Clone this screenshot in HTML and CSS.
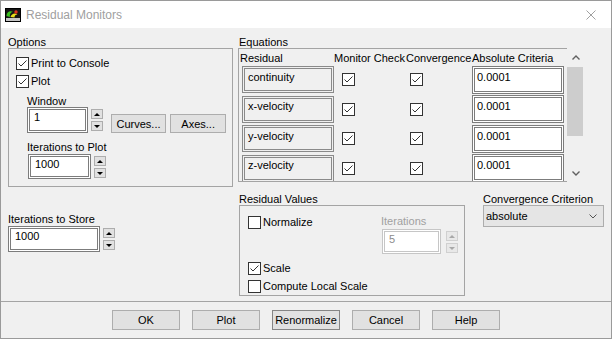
FILE: index.html
```html
<!DOCTYPE html>
<html>
<head>
<meta charset="utf-8">
<link rel="stylesheet" href="styles.css">
</head>
<body>
<div class="window">
  <div class="titlebar">
    <svg class="app-icon" viewBox="0 0 16 14">
      <rect x="0.5" y="0.5" width="15" height="13" fill="#151515" stroke="#000"/>
      <rect x="1" y="10" width="14" height="3" fill="#c4c4c4"/>
      <path d="M1.5 8 C1.5 3.5 5.5 2 8 4 C6 4 4.5 5.5 5 9 Z" fill="#3cc21e"/>
      <path d="M5.5 9 C6.5 5.5 10 4.5 12.5 6.5 C10.5 6.5 9.5 7.5 9.5 9.5 Z" fill="#e6dc1c"/>
      <circle cx="11" cy="4" r="1.7" fill="#e0301c"/>
    </svg>
    <span class="title">Residual Monitors</span>
    <svg class="close" viewBox="0 0 10 10"><path d="M0.5 0.5 L9.5 9.5 M9.5 0.5 L0.5 9.5"/></svg>
  </div>

  <div class="body">
    <div class="left">
      <div class="glabel">Options</div>
      <div class="groupbox options">
        <label class="check"><span class="cb on"><svg viewBox="0 0 11 11"><path d="M1.5 5.5 L4 8 L9.5 2.5"/></svg></span>Print to Console</label>
        <label class="check"><span class="cb on"><svg viewBox="0 0 11 11"><path d="M1.5 5.5 L4 8 L9.5 2.5"/></svg></span>Plot</label>
        <div class="sub">
          <div class="flabel win-label">Window</div>
          <div class="spin-row">
            <div class="input w-window">1</div>
            <div class="spinner"><span class="sbtn"><i class="tri up"></i></span><span class="sbtn"><i class="tri down"></i></span></div>
            <span class="btn small curves">Curves...</span>
            <span class="btn small axes">Axes...</span>
          </div>
          <div class="flabel plot-label">Iterations to Plot</div>
          <div class="spin-row plot-row">
            <div class="input w-plot">1000</div>
            <div class="spinner"><span class="sbtn"><i class="tri up"></i></span><span class="sbtn"><i class="tri down"></i></span></div>
          </div>
        </div>
      </div>
      <div class="flabel store-label">Iterations to Store</div>
      <div class="spin-row store-row">
        <div class="input w-store">1000</div>
        <div class="spinner"><span class="sbtn"><i class="tri up"></i></span><span class="sbtn"><i class="tri down"></i></span></div>
      </div>
    </div>

    <div class="right">
      <div class="glabel eq-label">Equations</div>
      <div class="eq">
        <div class="eq-frame">
          <div class="eq-grid">
            <div class="hd">Residual</div>
            <div class="hd">Monitor Check</div>
            <div class="hd">Convergence</div>
            <div class="hd">Absolute Criteria</div>

            <div class="name">continuity</div>
            <div class="c-mon"><span class="cb on"><svg viewBox="0 0 11 11"><path d="M1.5 5.5 L4 8 L9.5 2.5"/></svg></span></div>
            <div class="c-conv"><span class="cb on"><svg viewBox="0 0 11 11"><path d="M1.5 5.5 L4 8 L9.5 2.5"/></svg></span></div>
            <div class="crit">0.0001</div>

            <div class="name">x-velocity</div>
            <div class="c-mon"><span class="cb on"><svg viewBox="0 0 11 11"><path d="M1.5 5.5 L4 8 L9.5 2.5"/></svg></span></div>
            <div class="c-conv"><span class="cb on"><svg viewBox="0 0 11 11"><path d="M1.5 5.5 L4 8 L9.5 2.5"/></svg></span></div>
            <div class="crit">0.0001</div>

            <div class="name">y-velocity</div>
            <div class="c-mon"><span class="cb on"><svg viewBox="0 0 11 11"><path d="M1.5 5.5 L4 8 L9.5 2.5"/></svg></span></div>
            <div class="c-conv"><span class="cb on"><svg viewBox="0 0 11 11"><path d="M1.5 5.5 L4 8 L9.5 2.5"/></svg></span></div>
            <div class="crit">0.0001</div>

            <div class="name">z-velocity</div>
            <div class="c-mon"><span class="cb on"><svg viewBox="0 0 11 11"><path d="M1.5 5.5 L4 8 L9.5 2.5"/></svg></span></div>
            <div class="c-conv"><span class="cb on"><svg viewBox="0 0 11 11"><path d="M1.5 5.5 L4 8 L9.5 2.5"/></svg></span></div>
            <div class="crit">0.0001</div>
          </div>
        </div>
        <div class="scrollbar">
          <div class="arrow-area top"><svg viewBox="0 0 8 5"><path d="M0.5 4.5 L4 1 L7.5 4.5"/></svg></div>
          <div class="thumb"></div>
          <div class="track"></div>
          <div class="arrow-area bottom"><svg viewBox="0 0 8 5"><path d="M0.5 0.5 L4 4 L7.5 0.5"/></svg></div>
        </div>
      </div>

      <div class="bottom-row">
        <div class="resvals">
          <div class="glabel">Residual Values</div>
          <div class="groupbox resbox">
            <div class="res-top">
              <label class="check"><span class="cb"></span>Normalize</label>
              <div class="iter-field">
                <div class="flabel disabled">Iterations</div>
                <div class="spin-row iter-row">
                  <div class="input w-iter disabled">5</div>
                  <div class="spinner disabled"><span class="sbtn"><i class="tri up"></i></span><span class="sbtn"><i class="tri down"></i></span></div>
                </div>
              </div>
            </div>
            <label class="check scale"><span class="cb on"><svg viewBox="0 0 11 11"><path d="M1.5 5.5 L4 8 L9.5 2.5"/></svg></span>Scale</label>
            <label class="check"><span class="cb"></span>Compute Local Scale</label>
          </div>
        </div>
        <div class="conv">
          <div class="glabel">Convergence Criterion</div>
          <div class="combo"><span>absolute</span><svg viewBox="0 0 8 5"><path d="M0.5 0.5 L4 4 L7.5 0.5"/></svg></div>
        </div>
      </div>
    </div>
  </div>

  <div class="footer">
    <span class="btn">OK</span>
    <span class="btn">Plot</span>
    <span class="btn default">Renormalize</span>
    <span class="btn">Cancel</span>
    <span class="btn">Help</span>
  </div>
</div>
</body>
</html>
```

FILE: styles.css
```css
* { box-sizing: border-box; }
html, body { margin: 0; padding: 0; }
body {
  width: 612px;
  height: 339px;
  overflow: hidden;
  background: #fff;
  font-family: "Liberation Sans", Arial, sans-serif;
  font-size: 11px;
  color: #000;
}
.window {
  width: 612px;
  height: 339px;
  border: 1px solid #9a9a9a;
  background: #f0f0f0;
  display: flex;
  flex-direction: column;
}

/* title bar */
.titlebar {
  height: 27px;
  flex: none;
  background: #fff;
  display: flex;
  align-items: center;
}
.app-icon { width: 16px; height: 14px; margin-left: 4px; margin-right: 5px; }
.title { flex: 1; font-size: 12px; color: #a0a0a0; }
.close { width: 10px; height: 10px; margin-right: 15px; }
.close path { stroke: #a0a0a0; stroke-width: 1; fill: none; }

/* body */
.body {
  height: 273px;
  flex: none;
  display: flex;
  gap: 5px;
  padding: 8px 0 0 7px;
}
.left { width: 225px; display: flex; flex-direction: column; }
.right { width: 367px; display: flex; flex-direction: column; }

.glabel { height: 12px; line-height: 12px; white-space: nowrap; }
.flabel { height: 11px; line-height: 11px; white-space: nowrap; }
.groupbox { border: 1px solid #a4a4a4; }

.options { height: 139px; padding: 5px 6px 0 7px; }

.check { display: flex; align-items: center; height: 18px; gap: 2px; white-space: nowrap; }
.cb {
  width: 13px; height: 13px; flex: none;
  border: 1px solid #333;
  background: #fff;
  display: block;
}
.cb svg { display: block; width: 11px; height: 11px; }
.cb path { stroke: #333; stroke-width: 1; fill: none; }

.sub { margin-left: 11px; }
.win-label { margin-top: 6px; }
.spin-row { display: flex; align-items: flex-start; }
.plot-label { margin-top: 9px; }
.plot-row { margin-top: 1px; margin-left: 1px; }

.input {
  border: 3px double #7c7c7c;
  background: #fff;
  display: flex;
  align-items: center;
  padding: 0 0 5px 4px;
  line-height: 13px;
  white-space: nowrap;
}
.w-window { width: 61px; height: 26px; }
.w-plot { width: 63px; height: 25px; }
.w-store { width: 92px; height: 26px; }
.w-iter { width: 59px; height: 25px; }

.spinner { display: flex; flex-direction: column; gap: 2px; margin-left: 3px; margin-top: 2px; }
.sbtn {
  width: 12px; height: 10px;
  background: #e1e1e1;
  border: 1px solid #adadad;
  display: flex; align-items: center; justify-content: center;
}
.tri { width: 0; height: 0; border-left: 3px solid transparent; border-right: 3px solid transparent; }
.tri.up { border-bottom: 3px solid #000; }
.tri.down { border-top: 3px solid #000; }

.btn {
  background: #e1e1e1;
  border: 1px solid #adadad;
  display: flex; align-items: center; justify-content: center;
  white-space: nowrap;
}
.btn.small { width: 56px; height: 19px; margin-top: 7px; }
.curves { margin-left: 8px; }
.axes { margin-left: 4px; }

.store-label { margin-top: 27px; }
.store-row { margin-top: 1px; }

/* equations */
.eq-label { padding-left: 1px; }
.eq { display: flex; height: 134px; }
.eq-frame {
  width: 329px;
  border: 1px solid #a4a4a4;
  border-right: none;
  overflow: hidden;
}
.eq-grid {
  display: grid;
  grid-template-columns: 94px 72px 66px 96px;
  grid-template-rows: 13px;
  grid-auto-rows: 29.5px;
  padding: 3px 0 0 1px;
  align-items: center;
}
.hd { line-height: 13px; white-space: nowrap; align-self: start; }
.name {
  margin-left: 2px;
  width: 92px; height: 27px;
  border: 3px double #8a8a8a;
  background: #f0f0f0;
  display: flex; align-items: center;
  padding: 0 0 5px 3px;
  line-height: 13px;
}
.c-mon { padding-left: 8px; }
.c-conv { padding-left: 4px; }
.crit {
  width: 92px; height: 28px;
  border: 3px double #7c7c7c;
  background: #fff;
  display: flex; align-items: center;
  padding: 0 0 5px 2px;
  line-height: 13px;
}

.scrollbar { width: 17px; display: flex; flex-direction: column; }
.arrow-area { display: flex; justify-content: center; }
.arrow-area.top { height: 19px; align-items: center; }
.arrow-area.bottom { height: 17px; align-items: center; }
.arrow-area svg { width: 8px; height: 5px; }
.arrow-area path { stroke: #606060; stroke-width: 1.4; fill: none; }
.thumb { height: 69px; width: 16px; background: #cdcdcd; }
.track { flex: 1; }

/* bottom row */
.bottom-row { display: flex; gap: 18px; margin-top: 11px; padding-left: 1px; }
.resvals { width: 226px; }
.resbox { height: 91px; padding: 7px 6px 0 8px; }
.res-top { display: flex; justify-content: space-between; align-items: flex-start; height: 40px; }
.iter-field .flabel { margin-top: 2px; margin-left: -1px; height: 13px; line-height: 13px; }
.iter-row { margin-top: 1px; }
.flabel.disabled { color: #a0a0a0; }
.input.disabled { border-color: #c6c6c6; color: #8c8c8c; }
.spinner.disabled { margin-left: 5px; }
.spinner.disabled .sbtn { background: #e8e8e8; border-color: #d0d0d0; }
.spinner.disabled .tri.up { border-bottom-color: #a8a8a8; }
.spinner.disabled .tri.down { border-top-color: #a8a8a8; }
.check.scale { margin-top: 6px; }

.conv { width: 121px; }
.combo {
  height: 22px;
  background: #e5e5e5;
  border: 1px solid #adadad;
  display: flex; align-items: center; justify-content: space-between;
  padding: 0 6px 0 2px;
}
.combo svg { width: 8px; height: 5px; }
.combo path { stroke: #555; stroke-width: 1; fill: none; }

/* footer */
.footer {
  flex: 1;
  border-top: 1px solid #a4a4a4;
  display: flex;
  justify-content: center;
  align-items: flex-start;
  gap: 12px;
  padding-top: 8px;
}
.footer .btn { width: 68px; height: 20px; }
.footer .btn.default { border-color: #858585; }
```
